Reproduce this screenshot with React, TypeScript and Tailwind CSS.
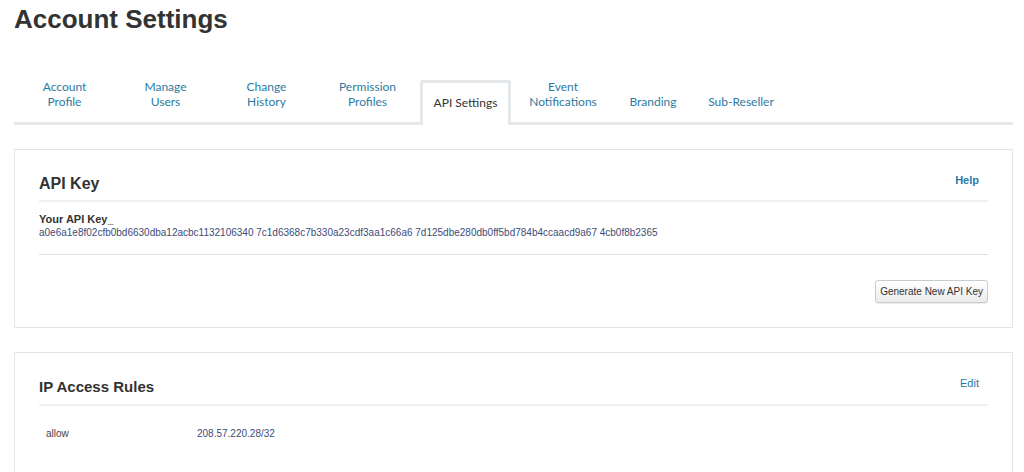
const tabs = [
  { label: ["Account", "Profile"], w: "w-[101px]" },
  { label: ["Manage", "Users"], w: "w-[101px]" },
  { label: ["Change", "History"], w: "w-[101px]" },
  { label: ["Permission", "Profiles"], w: "w-[101px]" },
  { label: ["API Settings"], w: "w-[91px]", active: true },
  { label: ["Event", "Notifications"], w: "w-[104px]" },
  { label: ["Branding"], w: "w-[76px]" },
  { label: ["Sub-Reseller"], w: "w-[100px]" },
];

const apiKey =
  "a0e6a1e8f02cfb0bd6630dba12acbc1132106340 7c1d6368c7b330a23cdf3aa1c66a6 7d125dbe280db0ff5bd784b4ccaacd9a67 4cb0f8b2365";

export default function App() {
  return (
    <div className="h-[472px] overflow-hidden bg-white font-['Liberation_Sans',Arial,sans-serif] text-[#333]">
      <h1 className="px-[14px] pt-[3px] text-[26px] font-bold leading-[32px] text-[#333]">
        Account Settings
      </h1>

      {/* tabs */}
      <div className="ml-[14px] mr-[11px] mt-[44px] flex items-end border-b-[3px] border-[#e4e8ea]">
        {tabs.map((t) =>
          t.active ? (
            <div
              key={t.label.join(" ")}
              className={`${t.w} -mb-[3px] ml-[2px] flex h-[45px] items-center justify-center rounded-t-[3px] border-[3px] border-b-0 border-[#e4e8ea] bg-white pb-[2px] font-['Lato',sans-serif] text-[12px] text-[#333]`}
            >
              {t.label[0]}
            </div>
          ) : (
            <div
              key={t.label.join(" ")}
              className={`${t.w} flex h-[43px] flex-col items-center justify-start font-['Lato',sans-serif] text-[12px] leading-[15px] text-[#2b7ba3]`}
            >
              {t.label.length === 1 ? (
                <span className="mt-[15px]">{t.label[0]}</span>
              ) : (
                t.label.map((l) => <span key={l}>{l}</span>)
              )}
            </div>
          )
        )}
      </div>

      {/* API key panel */}
      <div className="ml-[14px] mr-[11px] mt-[24px] border border-[#e2e6e8] px-[24px] pb-[24px] pt-[25px]">
        <div className="flex items-center justify-between border-b-2 border-[#eef0f2] pb-[7px]">
          <h2 className="text-[16px] font-bold leading-[18px] text-[#333]">API Key</h2>
          <a className="-mt-[8px] mr-[9px] text-[11px] font-bold text-[#1f7aa8]">Help</a>
        </div>
        <div className="border-b border-[#dcdfe2] pb-[15px] pt-[11px]">
          <div className="text-[11px] font-bold leading-[13px] text-[#333]">Your API Key_</div>
          <div className="text-[10px] leading-[13px] text-[#3d4c78]">{apiKey}</div>
        </div>
        <div className="flex justify-end pt-[25px]">
          <button className="h-[23px] rounded-[3px] border border-[#c9ccce] bg-gradient-to-b from-white to-[#ececec] px-[4px] text-[10px] text-[#333] shadow-[0_1px_1px_rgba(0,0,0,0.08)]">
            Generate New API Key
          </button>
        </div>
      </div>

      {/* IP access panel */}
      <div className="ml-[14px] mr-[11px] mt-[24px] h-[130px] border border-b-0 border-[#e2e6e8] px-[24px] pt-[25px]">
        <div className="flex items-center justify-between border-b-2 border-[#eef0f2] pb-[8px]">
          <h2 className="text-[15px] font-bold leading-[18px] text-[#333]">IP Access Rules</h2>
          <a className="-mt-[8px] mr-[9px] text-[11px] text-[#1f7aa8]">Edit</a>
        </div>
        <div className="flex pt-[21px] text-[10px] leading-[13px]">
          <span className="w-[158px] pl-[7px] text-[#444]">allow</span>
          <span className="text-[#3d4c78]">208.57.220.28/32</span>
        </div>
      </div>
    </div>
  );
}
